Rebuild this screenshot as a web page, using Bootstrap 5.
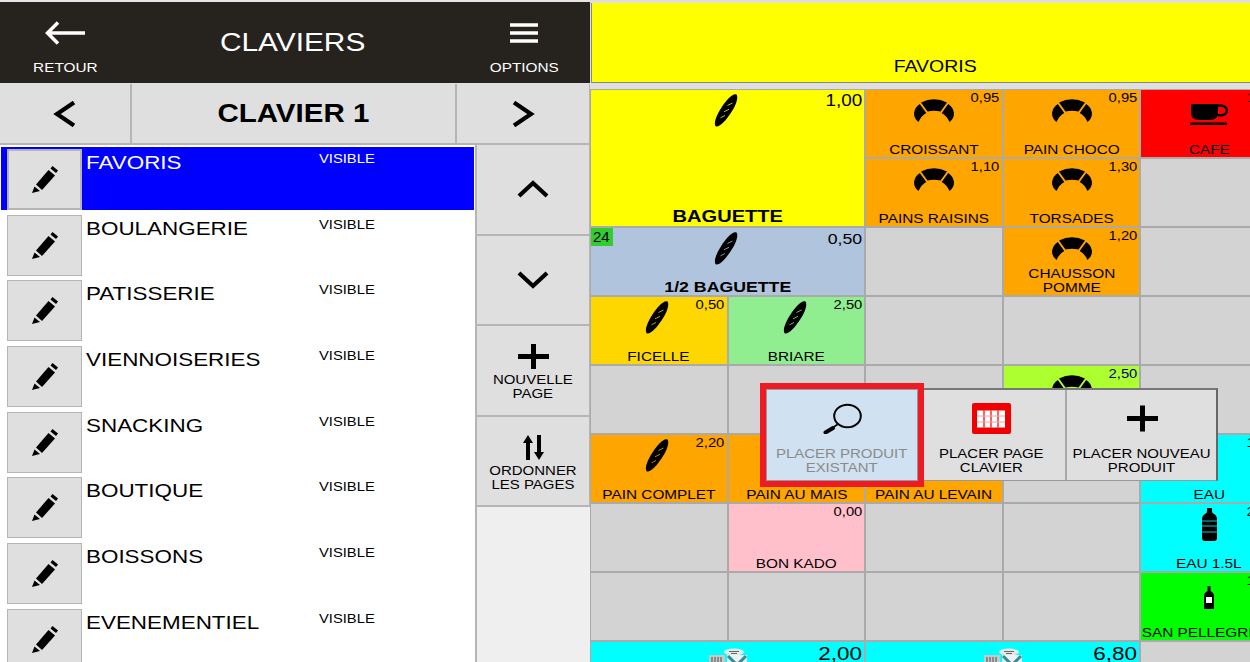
<!DOCTYPE html>
<html lang="fr">
<head>
    <meta charset="UTF-8">
    <title>Claviers</title>
    <link href="https://cdn.jsdelivr.net/npm/bootstrap@5.3.2/dist/css/bootstrap.min.css" rel="stylesheet">
    <style>
        html, body { height: 100%; }
        body { width: 1250px; height: 662px; overflow: hidden; background: #e6e6e6; font-family: "Liberation Sans", Arial, sans-serif; color: #000; }
        /* the source screen is stretched horizontally, text follows */
        .wx { display: inline-block; transform: scaleX(1.18); white-space: nowrap; }
        .wx-l { transform-origin: left center; }
        .wx-r { transform-origin: right center; }

        .left-pane { width: 590px; height: 660px; margin-top: 2px; flex: none; }
        .top-bar { height: 81px; background: #26231e; color: #fff; flex: none; }
        .top-side { width: 131px; flex: none; }
        .top-side.opt { width: 132px; }
        .top-side svg { display: block; margin: 21px auto 0; }
        .top-side .cap { font-size: 13px; line-height: 15px; margin-top: 17px; }
        .top-title { font-size: 25.3px; line-height: 30px; padding: 25px 4px 0 0; }
        .top-side.back svg { margin-top: 19px; }
        .top-side.back .cap { margin-top: 15px; }

        .nav-bar { height: 62px; background: #dfdfdf; border-bottom: 2px solid #b5b5b5; border-top: 1px solid #dfdfdf; flex: none; }
        .nav-side { width: 132px; flex: none; border-right: 2px solid #b5b5b5; }
        .nav-side.next { width: 135px; border-right: 1px solid #b5b5b5; border-left: 2px solid #b5b5b5; }
        .nav-title { font-size: 25px; font-weight: 700; padding-top: 1px; }

        .page-list { width: 477px; flex: none; background: #fff; border-right: 2px solid #b5b5b5; padding: 2px 0 0 1px; }
        .page-row { height: 63px; margin-bottom: 2.7px; width: 473px; }
        .page-row.on { background: #0000ff; color: #fff; }
        .edit-btn { width: 75px; height: 61px; margin: 2px 4px 0 6px; background: #dfdfdf; border: 1px solid #b5b5b5; flex: none; border-radius: 0; padding: 0; }
        .page-row.on .edit-btn { border-width: 2px; }
        .page-name { width: 233px; flex: none; font-size: 19px; line-height: 22px; padding-top: 5px; }
        .page-vis { font-size: 12.5px; line-height: 16px; padding-top: 4px; }

        .side-tools { width: 113px; flex: none; background: #efefef; }
        .tool-btn { height: 90.5px; background: #dfdfdf; border-bottom: 2px solid #b5b5b5; border-right: 1px solid #b5b5b5; font-size: 12.7px; line-height: 14px; }
        .tool-btn.has-cap { padding-top: 5px; }
        .tool-btn .cap { margin-top: 4px; }

        .right-pane { flex: 1 1 auto; min-width: 0; height: 662px; overflow: hidden; background: #dfdfdf; }
        .fav-band { width: 687px; height: 80px; margin: 3px 0 0 1px; background: #ffff00; border-bottom: 1px solid #888; border-left: 1px solid #888; font-size: 16.5px; line-height: 20px; padding-bottom: 6px; }
        .key-grid { display: grid; grid-template-columns: repeat(5, 135.6px); grid-auto-rows: 67px; gap: 2px; margin-top: 6px; padding: 1px 0 0 1px; background: #aaa; width: 700px; height: 600px; }
        .key { position: relative; background: #d3d3d3; font-size: 13px; line-height: 14px; --c: #d3d3d3; }
        .key > svg { display: block; color: var(--c); flex: none; }
        .key > svg.bag { margin-right: 3px; }
        .key .lbl { margin-top: auto; }
        .key .price { position: absolute; top: 1px; right: 2px; font-size: 12.5px; line-height: 15px; }
        .span-2 { grid-column: span 2; }
        .span-22 { grid-column: span 2; grid-row: span 2; }
        .t-4 { margin-top: 4px; }
        .t-6 { margin-top: 6px; }
        .t-9 { margin-top: 9px; }
        .t-13 { margin-top: 13px; }
        .t-14 { margin-top: 14px; }
        .k-yellow { background: #ffff00; --c: #ffff00; }
        .k-orange { background: #ffa500; --c: #ffa500; }
        .k-gold { background: #ffd700; --c: #ffd700; }
        .k-lgreen { background: #90ee90; --c: #90ee90; }
        .k-steel { background: #b0c4de; --c: #b0c4de; }
        .k-pink { background: #ffc0cb; --c: #ffc0cb; }
        .k-cyan { background: #00ffff; --c: #00ffff; }
        .k-lime { background: #00ff00; --c: #00ff00; }
        .k-red { background: #ff0000; --c: #ff0000; }
        .k-gy { background: #adff2f; --c: #adff2f; }
        .k-gy .price { color: #00008b; }
        .big-lbl { font-size: 17px; font-weight: 700; line-height: 18px; }
        .mid-lbl { font-size: 15px; font-weight: 700; line-height: 16px; }
        .price.p16 { font-size: 16px; line-height: 18px; top: 2px; }
        .price.p15 { font-size: 15px; line-height: 17px; top: 2px; }
        .price.p19 { font-size: 19px; line-height: 20px; top: 2px; }
        .qty-tag { position: absolute; top: 0; left: 0; width: 22px; height: 18px; background: #32cd32; font-size: 15px; line-height: 18px; padding-left: 2px; }

        .place-menu { position: absolute; left: 175px; top: 388px; width: 453px; height: 93px; background: #dfdfdf; border: 1px solid #999; border-top: 2px solid #777; border-right: 2px solid #666; }
        .place-btn { height: 100%; font-size: 12.7px; line-height: 14px; padding-top: 13px; border-right: 2px solid #aaa; flex: none; }
        .place-btn .cap { margin-top: 13px; }
        .place-btn.p1 { width: 152px; background: #d0e1f1; color: #8a8a8a; border: 1px solid #999; outline: 6px solid #ed1c24; margin: -1px 0; height: calc(100% + 2px); position: relative; }
        .place-btn.p2 { width: 149px; }
        .place-btn.p3 { width: 150px; border-right: 0; }
    </style>
</head>
<body class="d-flex">

<svg width="0" height="0" class="position-absolute">
    <defs>
        <symbol id="i-baguette" viewBox="0 0 24 33">
            <path d="M22.500 0.500C25 4 21 13 16.500 19.500C12 26 6.500 33 2 32.500C-1 30 2.500 21 7.500 13.500C12 6.500 18.500 -1 22.500 0.500Z" fill="#000"/>
            <path d="M13.500 11.500L18.500 9M10 17.800L15 15.300M6.500 23.800L11 21.500" stroke="currentColor" stroke-width="1" opacity="0.75" fill="none"/>
        </symbol>
        <symbol id="i-croissant" viewBox="0 0 40 23">
            <path d="M7 3.500Q20 -3 33 3.500L26.500 12.500Q20 11 13.500 12.500Z" fill="#000"/>
            <path d="M5.800 5L12.300 14Q7.500 16.500 4.500 23Q0 20 0 14Q1 8 5.800 5Z" fill="#000"/>
            <path d="M34.200 5L27.700 14Q32.500 16.500 35.500 23Q40 20 40 14Q39 8 34.200 5Z" fill="#000"/>
        </symbol>
        <symbol id="i-cup" viewBox="0 0 39 22">
            <path d="M1 0H28V9Q28 16 20 16H9Q1 16 1 9Z" fill="#000"/>
            <ellipse cx="30.500" cy="6.500" rx="6.500" ry="5" fill="none" stroke="#000" stroke-width="2.400"/>
            <rect x="0" y="18.500" width="37" height="2.500" rx="1" fill="#000"/>
        </symbol>
        <symbol id="i-bottle" viewBox="0 0 15 33">
            <path d="M5 0H10V3L10.500 5Q15 7 15 11V30Q15 33 12 33H3Q0 33 0 30V11Q0 7 4.500 5L5 3Z" fill="#000"/>
            <path d="M0 13H15M0 18H15M0 24H15" stroke="currentColor" stroke-width="1" opacity="0.8"/>
        </symbol>
        <symbol id="i-wine" viewBox="0 0 10 23">
            <path d="M3.500 0H6.500V5Q10 7 10 10V23H0V10Q0 7 3.500 5Z" fill="#000"/>
            <rect x="2" y="11" width="6" height="6" fill="#fff"/>
        </symbol>
        <symbol id="i-pencil" viewBox="0 0 26 27">
            <path d="M4 18.500L16.500 4L23 9.500L10 24Z" fill="#000"/>
            <path d="M2.500 20.500L8 25L0 27Z" fill="#000"/>
            <path d="M18.500 2.500L20.500 0L26 4.500L24 7Z" fill="#000"/>
        </symbol>
        <symbol id="i-gift" viewBox="0 0 38 30">
            <ellipse cx="25" cy="4" rx="10" ry="3.500" fill="#e8e8e8"/>
            <path d="M20 3.500H30M22 5.500H28" stroke="#666" stroke-width="1"/>
            <rect x="0" y="7" width="16" height="23" fill="#c8c8c8"/>
            <path d="M3 9V20M6 9V20M9 9V20M12 9V20" stroke="#777" stroke-width="1.500"/>
            <rect x="18" y="7" width="20" height="23" fill="#f0f0f0"/>
            <path d="M19 8L28 17L37 8" stroke="#2a8f9f" stroke-width="3" fill="none"/>
        </symbol>
    </defs>
</svg>

<!-- Colonne gauche -->
<div class="left-pane d-flex flex-column">
    <div class="top-bar d-flex">
        <div class="top-side back text-center">
            <svg width="41" height="24" viewBox="0 0 41 24"><path d="M13 1.500L2.500 12L13 22.500M3 12H40" fill="none" stroke="#fff" stroke-width="3.500"/></svg>
            <div class="cap"><span class="wx">RETOUR</span></div>
        </div>
        <div class="top-title flex-grow-1 text-center"><span class="wx">CLAVIERS</span></div>
        <div class="top-side opt text-center">
            <svg width="28" height="20" viewBox="0 0 28 20"><path d="M0 2H28M0 10H28M0 18H28" stroke="#fff" stroke-width="3.500"/></svg>
            <div class="cap"><span class="wx">OPTIONS</span></div>
        </div>
    </div>

    <div class="nav-bar d-flex">
        <div class="nav-side d-flex align-items-center justify-content-center">
            <svg width="24" height="26" viewBox="0 0 24 26"><path d="M21 1.500L4 13L21 24.500" fill="none" stroke="#000" stroke-width="4.200"/></svg>
        </div>
        <div class="nav-title flex-grow-1 d-flex align-items-center justify-content-center"><span class="wx">CLAVIER 1</span></div>
        <div class="nav-side next d-flex align-items-center justify-content-center">
            <svg width="24" height="26" viewBox="0 0 24 26"><path d="M3 1.500L20 13L3 24.500" fill="none" stroke="#000" stroke-width="4.200"/></svg>
        </div>
    </div>

    <div class="d-flex flex-grow-1 overflow-hidden">
        <div class="page-list">
            <div class="page-row on d-flex">
                <button class="edit-btn btn d-flex align-items-center justify-content-center"><svg width="26" height="27"><use href="#i-pencil"/></svg></button>
                <div class="page-name"><span class="wx wx-l">FAVORIS</span></div>
                <div class="page-vis"><span class="wx wx-l">VISIBLE</span></div>
            </div>
            <div class="page-row d-flex">
                <button class="edit-btn btn d-flex align-items-center justify-content-center"><svg width="26" height="27"><use href="#i-pencil"/></svg></button>
                <div class="page-name"><span class="wx wx-l">BOULANGERIE</span></div>
                <div class="page-vis"><span class="wx wx-l">VISIBLE</span></div>
            </div>
            <div class="page-row d-flex">
                <button class="edit-btn btn d-flex align-items-center justify-content-center"><svg width="26" height="27"><use href="#i-pencil"/></svg></button>
                <div class="page-name"><span class="wx wx-l">PATISSERIE</span></div>
                <div class="page-vis"><span class="wx wx-l">VISIBLE</span></div>
            </div>
            <div class="page-row d-flex">
                <button class="edit-btn btn d-flex align-items-center justify-content-center"><svg width="26" height="27"><use href="#i-pencil"/></svg></button>
                <div class="page-name"><span class="wx wx-l">VIENNOISERIES</span></div>
                <div class="page-vis"><span class="wx wx-l">VISIBLE</span></div>
            </div>
            <div class="page-row d-flex">
                <button class="edit-btn btn d-flex align-items-center justify-content-center"><svg width="26" height="27"><use href="#i-pencil"/></svg></button>
                <div class="page-name"><span class="wx wx-l">SNACKING</span></div>
                <div class="page-vis"><span class="wx wx-l">VISIBLE</span></div>
            </div>
            <div class="page-row d-flex">
                <button class="edit-btn btn d-flex align-items-center justify-content-center"><svg width="26" height="27"><use href="#i-pencil"/></svg></button>
                <div class="page-name"><span class="wx wx-l">BOUTIQUE</span></div>
                <div class="page-vis"><span class="wx wx-l">VISIBLE</span></div>
            </div>
            <div class="page-row d-flex">
                <button class="edit-btn btn d-flex align-items-center justify-content-center"><svg width="26" height="27"><use href="#i-pencil"/></svg></button>
                <div class="page-name"><span class="wx wx-l">BOISSONS</span></div>
                <div class="page-vis"><span class="wx wx-l">VISIBLE</span></div>
            </div>
            <div class="page-row d-flex">
                <button class="edit-btn btn d-flex align-items-center justify-content-center"><svg width="26" height="27"><use href="#i-pencil"/></svg></button>
                <div class="page-name"><span class="wx wx-l">EVENEMENTIEL</span></div>
                <div class="page-vis"><span class="wx wx-l">VISIBLE</span></div>
            </div>
        </div>

        <div class="side-tools">
            <div class="tool-btn d-flex align-items-center justify-content-center">
                <svg width="32" height="18" viewBox="0 0 32 18"><path d="M2 16L16 3L30 16" fill="none" stroke="#000" stroke-width="4.200"/></svg>
            </div>
            <div class="tool-btn d-flex align-items-center justify-content-center">
                <svg width="32" height="18" viewBox="0 0 32 18"><path d="M2 2L16 15L30 2" fill="none" stroke="#000" stroke-width="4.200"/></svg>
            </div>
            <div class="tool-btn has-cap d-flex flex-column align-items-center justify-content-center text-center">
                <svg width="31" height="25" viewBox="0 0 31 25"><path d="M0 12.500H31M15.500 0V25" stroke="#000" stroke-width="5"/></svg>
                <div class="cap"><span class="wx">NOUVELLE<br>PAGE</span></div>
            </div>
            <div class="tool-btn has-cap d-flex flex-column align-items-center justify-content-center text-center">
                <svg width="21" height="25" viewBox="0 0 21 25"><path d="M5 0L10 8H7V25H3V8H0Z M16 25L11 17H14V0H18V17H21Z" fill="#000"/></svg>
                <div class="cap"><span class="wx">ORDONNER<br>LES PAGES</span></div>
            </div>
        </div>
    </div>
</div>

<!-- Clavier -->
<div class="right-pane position-relative">
    <div class="fav-band d-flex align-items-end justify-content-center"><span class="wx">FAVORIS</span></div>
    <div class="key-grid">
        <div class="key k-yellow span-22 d-flex flex-column align-items-center"><svg class="bag t-4" width="24" height="33"><use href="#i-baguette"/></svg><span class="price p16"><span class="wx wx-r">1,00</span></span><div class="lbl big-lbl"><span class="wx">BAGUETTE</span></div></div>
        <div class="key k-orange d-flex flex-column align-items-center"><svg class="t-9" width="40" height="23"><use href="#i-croissant"/></svg><span class="price"><span class="wx wx-r">0,95</span></span><div class="lbl"><span class="wx">CROISSANT</span></div></div>
        <div class="key k-orange d-flex flex-column align-items-center"><svg class="t-9" width="40" height="23"><use href="#i-croissant"/></svg><span class="price"><span class="wx wx-r">0,95</span></span><div class="lbl"><span class="wx">PAIN CHOCO</span></div></div>
        <div class="key k-red d-flex flex-column align-items-center"><svg class="t-14" width="39" height="22"><use href="#i-cup"/></svg><span class="price"><span class="wx wx-r">1,20</span></span><div class="lbl"><span class="wx">CAFE</span></div></div>

        <div class="key k-orange d-flex flex-column align-items-center"><svg class="t-9" width="40" height="23"><use href="#i-croissant"/></svg><span class="price"><span class="wx wx-r">1,10</span></span><div class="lbl"><span class="wx">PAINS RAISINS</span></div></div>
        <div class="key k-orange d-flex flex-column align-items-center"><svg class="t-9" width="40" height="23"><use href="#i-croissant"/></svg><span class="price"><span class="wx wx-r">1,30</span></span><div class="lbl"><span class="wx">TORSADES</span></div></div>
        <div class="key"></div>

        <div class="key k-steel span-2 d-flex flex-column align-items-center"><span class="qty-tag">24</span><svg class="bag t-4" width="24" height="33"><use href="#i-baguette"/></svg><span class="price p15"><span class="wx wx-r">0,50</span></span><div class="lbl mid-lbl"><span class="wx">1/2 BAGUETTE</span></div></div>
        <div class="key"></div>
        <div class="key k-orange d-flex flex-column align-items-center"><svg class="t-9" width="40" height="23"><use href="#i-croissant"/></svg><span class="price"><span class="wx wx-r">1,20</span></span><div class="lbl text-center"><span class="wx">CHAUSSON<br>POMME</span></div></div>
        <div class="key"></div>

        <div class="key k-gold d-flex flex-column align-items-center"><svg class="bag t-4" width="24" height="33"><use href="#i-baguette"/></svg><span class="price"><span class="wx wx-r">0,50</span></span><div class="lbl"><span class="wx">FICELLE</span></div></div>
        <div class="key k-lgreen d-flex flex-column align-items-center"><svg class="bag t-4" width="24" height="33"><use href="#i-baguette"/></svg><span class="price"><span class="wx wx-r">2,50</span></span><div class="lbl"><span class="wx">BRIARE</span></div></div>
        <div class="key"></div><div class="key"></div><div class="key"></div>

        <div class="key"></div><div class="key"></div><div class="key"></div>
        <div class="key k-gy d-flex flex-column align-items-center"><svg class="t-9" width="40" height="23"><use href="#i-croissant"/></svg><span class="price"><span class="wx wx-r">2,50</span></span></div>
        <div class="key"></div>

        <div class="key k-orange d-flex flex-column align-items-center"><svg class="bag t-4" width="24" height="33"><use href="#i-baguette"/></svg><span class="price"><span class="wx wx-r">2,20</span></span><div class="lbl"><span class="wx">PAIN COMPLET</span></div></div>
        <div class="key k-orange d-flex flex-column align-items-center"><svg class="bag t-4" width="24" height="33"><use href="#i-baguette"/></svg><div class="lbl"><span class="wx">PAIN AU MAIS</span></div></div>
        <div class="key k-orange d-flex flex-column align-items-center"><div class="lbl"><span class="wx">PAIN AU LEVAIN</span></div></div>
        <div class="key"></div>
        <div class="key k-cyan d-flex flex-column align-items-center"><span class="price"><span class="wx wx-r">1,00</span></span><div class="lbl"><span class="wx">EAU</span></div></div>

        <div class="key"></div>
        <div class="key k-pink d-flex flex-column align-items-center"><span class="price"><span class="wx wx-r">0,00</span></span><div class="lbl"><span class="wx">BON KADO</span></div></div>
        <div class="key"></div><div class="key"></div>
        <div class="key k-cyan d-flex flex-column align-items-center"><svg class="t-4" width="15" height="33"><use href="#i-bottle"/></svg><span class="price"><span class="wx wx-r">2,00</span></span><div class="lbl"><span class="wx">EAU 1.5L</span></div></div>

        <div class="key"></div><div class="key"></div><div class="key"></div><div class="key"></div>
        <div class="key k-lime d-flex flex-column align-items-center"><svg class="t-13" width="10" height="23"><use href="#i-wine"/></svg><span class="price"><span class="wx wx-r">1,50</span></span><div class="lbl"><span class="wx">SAN PELLEGRINO</span></div></div>

        <div class="key k-cyan span-2 d-flex flex-column align-items-center"><svg class="t-6" width="38" height="30"><use href="#i-gift"/></svg><span class="price p19"><span class="wx wx-r">2,00</span></span></div>
        <div class="key k-cyan span-2 d-flex flex-column align-items-center"><svg class="t-6" width="38" height="30"><use href="#i-gift"/></svg><span class="price p19"><span class="wx wx-r">6,80</span></span></div>
        <div class="key"></div>
    </div>

    <!-- Menu flottant -->
    <div class="place-menu d-flex">
        <div class="place-btn p1 d-flex flex-column align-items-center text-center">
            <svg width="39" height="31" viewBox="0 0 39 31"><ellipse cx="24.500" cy="13" rx="13.300" ry="11.300" fill="none" stroke="#000" stroke-width="2"/><path d="M14.500 21.500L2 29.500" stroke="#000" stroke-width="1.600"/><path d="M10 25L2.500 29.500" stroke="#000" stroke-width="4" stroke-linecap="round"/></svg>
            <div class="cap"><span class="wx">PLACER PRODUIT<br>EXISTANT</span></div>
        </div>
        <div class="place-btn p2 d-flex flex-column align-items-center text-center">
            <svg width="39" height="31" viewBox="0 0 39 31"><rect width="39" height="31" rx="2" fill="#f00000"/><rect x="5" y="7.500" width="28" height="17" fill="#fff"/><path d="M12 7.500V24.500M19 7.500V24.500M26 7.500V24.500" stroke="#f00000" stroke-width="1.200"/><path d="M5 13H33M5 19H33" stroke="#f8a0a0" stroke-width="1"/></svg>
            <div class="cap"><span class="wx">PLACER PAGE<br>CLAVIER</span></div>
        </div>
        <div class="place-btn p3 d-flex flex-column align-items-center text-center">
            <svg width="31" height="31" viewBox="0 0 31 31"><path d="M0 15.500H31M15.500 2.500V28.500" stroke="#000" stroke-width="5"/></svg>
            <div class="cap"><span class="wx">PLACER NOUVEAU<br>PRODUIT</span></div>
        </div>
    </div>
</div>

<script src="https://cdn.jsdelivr.net/npm/bootstrap@5.3.2/dist/js/bootstrap.bundle.min.js"></script>
</body>
</html>
